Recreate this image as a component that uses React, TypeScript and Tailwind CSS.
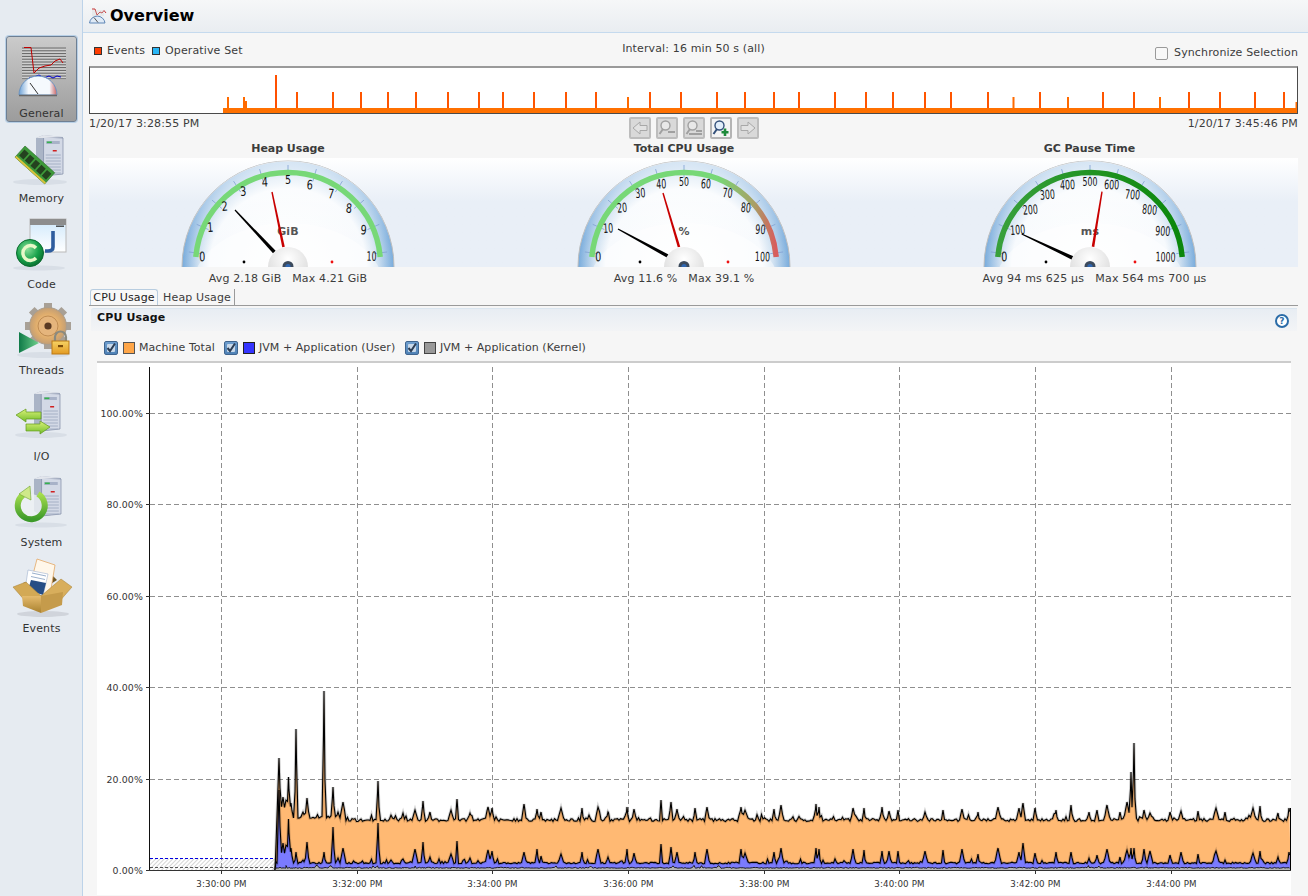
import React from "react";

function seeded(seed: number) {
  let s = seed;
  return () => {
    s = (s * 1664525 + 1013904223) % 4294967296;
    return s / 4294967296;
  };
}

// x, machine top y, user top y, half width
const SPIKES: [number, number, number, number][] = [
  [279, 758, 790, 2], [283, 797, 843, 3], [286, 800, 845, 2], [288.5, 777, 819, 1.6], [291, 803, 848, 2], [296, 729, 852, 1.4],
  [303, 812, 860, 2], [307, 798, 842, 2], [324, 691, 852, 1.4], [333, 787, 827, 1.6], [338, 812, 858, 2], [343, 802, 848, 3],
  [378, 781, 823, 1.5], [391, 815, 860, 2], [403, 813, 859, 2], [415, 810, 849, 3], [423, 801, 842, 1.6], [430, 812, 857, 2],
  [451, 810, 854, 3], [457, 799, 841, 1.4], [470, 813, 858, 2], [488, 807, 850, 3], [492, 808, 851, 2], [524, 804, 852, 2.4],
  [537, 809, 849, 1.6], [541, 812, 856, 1.6], [561, 808, 854, 3], [582, 808, 852, 1.4], [598, 807, 849, 3], [608, 812, 857, 2],
  [627, 807, 849, 1.4], [634, 809, 853, 2.2], [661, 800, 844, 1.4], [671, 802, 847, 1.8], [677, 809, 852, 2.2], [695, 808, 852, 1.6],
  [707, 807, 849, 2.4], [741, 807, 849, 2], [745, 810, 853, 3.4], [774, 809, 852, 1.6], [781, 805, 848, 2.4], [816, 804, 848, 1.4],
  [819, 807, 849, 1.4], [853, 808, 849, 2.2], [864, 808, 850, 1.4], [882, 807, 851, 1.6], [889, 811, 851, 2.2], [898, 810, 851, 1.4],
  [925, 812, 851, 2.6], [943, 810, 850, 1.6], [962, 809, 849, 2.6], [978, 812, 854, 1.4], [998, 807, 848, 3], [1019, 808, 852, 2],
  [1023, 803, 843, 2.4], [1035, 808, 853, 2], [1056, 810, 852, 1.6], [1071, 805, 852, 1.8], [1089, 812, 858, 1.6], [1097, 810, 855, 1.6],
  [1107, 805, 849, 3], [1120, 812, 857, 1.5], [1127, 802, 850, 3.5], [1131, 772, 848, 1.4], [1134, 743, 848, 1.4],
  [1144, 810, 849, 2], [1150, 813, 851, 3], [1170, 812, 855, 2], [1181, 811, 852, 2.4], [1198, 811, 854, 1.5], [1216, 808, 851, 3.4],
  [1225, 812, 860, 1.5], [1253, 808, 853, 3], [1260, 806, 851, 1.5], [1278, 813, 857, 1.6], [1289, 808, 852, 1.6],
];

function buildChart() {
  const r = seeded(77);
  const top: [number, number][] = [[275, 870], [275.5, 858]];
  const user: [number, number][] = [[275, 870], [276, 862]];
  const kern: [number, number][] = [[275, 870], [276, 868]];
  const xs: number[] = [];
  for (let x = 277; x <= 1290; x += 1.5) xs.push(x);
  SPIKES.forEach((s) => xs.push(s[0]));
  xs.sort((a, b) => a - b);
  for (const x of xs) {
    const bump = r() > 0.88 ? r() * 5 : 0;
    const base = (x < 345 ? 817 : 820) + (r() - 0.5) * 3 - bump;
    const ub = 863 + (r() - 0.5) * 1.6 - (r() > 0.93 ? r() * 4 : 0);
    let t = base;
    let u = ub;
    for (const [sx, st, su, w] of SPIKES) {
      const k = 1 - Math.abs(x - sx) / w;
      if (k > 0) {
        t = Math.min(t, base - (base - st) * k);
        u = Math.min(u, ub - (ub - su) * k);
      }
    }
    top.push([x, t]);
    user.push([x, u]);
    kern.push([x, 867.8 + (r() - 0.5) * 1 - (r() > 0.97 ? 2 : 0)]);
  }
  const line = (p: [number, number][]) => p.map(([a, b], i) => `${i ? "L" : "M"}${a} ${b.toFixed(1)}`).join(" ");
  const area = (p: [number, number][]) => `${line(p)} L1290.5 870 L275 870 Z`;
  return { t: area(top), u: area(user), k: area(kern), tl: line(top), ul: line(user), kl: line(kern) };
}
const CHART = buildChart();

const XT: [number, string][] = [
  [221.5, "3:30:00 PM"], [357.5, "3:32:00 PM"], [492.5, "3:34:00 PM"], [628.5, "3:36:00 PM"],
  [764.5, "3:38:00 PM"], [899.5, "3:40:00 PM"], [1035.5, "3:42:00 PM"], [1171.5, "3:44:00 PM"],
];
const YT: [number, string][] = [
  [413.5, "100.00%"], [504.5, "80.00%"], [596.5, "60.00%"], [687.5, "40.00%"], [779.5, "20.00%"], [870.5, "0.00%"],
];

function CpuChart() {
  return (
    <svg width="1194" height="532" viewBox="97 363 1194 532" className="block">
      <defs>
        <pattern id="hatch" width="3" height="3" patternUnits="userSpaceOnUse" patternTransform="rotate(45)">
          <line x1="0" y1="0" x2="0" y2="3" stroke="#a9a9a9" strokeWidth="1" />
        </pattern>
      </defs>
      {YT.slice(0, 5).map(([y]) => (
        <line key={y} x1="150" x2="1291" y1={y} y2={y} stroke="#8f8f8f" strokeDasharray="5 3" />
      ))}
      {XT.map(([x]) => (
        <line key={x} x1={x} x2={x} y1="367" y2="870" stroke="#8f8f8f" strokeDasharray="5 3" />
      ))}
      <rect x="150" y="858.5" width="125" height="11.5" fill="url(#hatch)" />
      <line x1="150" x2="275" y1="858.5" y2="858.5" stroke="#0000e0" strokeDasharray="3 2" />
      <line x1="150" x2="275" y1="867.5" y2="867.5" stroke="#555" strokeDasharray="3 2" />
      <path d={CHART.t} fill="#ffb973" />
      <path d={CHART.tl} fill="none" stroke="#000" strokeWidth="3" strokeOpacity="0.18" />
      <path d={CHART.tl} fill="none" stroke="#000" strokeWidth="1.1" />
      <path d={CHART.u} fill="#7b7bff" />
      <path d={CHART.ul} fill="none" stroke="#000" strokeWidth="3" strokeOpacity="0.15" />
      <path d={CHART.ul} fill="none" stroke="#000" strokeWidth="1.1" />
      <path d={CHART.k} fill="#b3b3b3" />
      <path d={CHART.kl} fill="none" stroke="#000" strokeWidth="0.8" />
      <line x1="1290.5" x2="1290.5" y1="808" y2="870" stroke="#000" />
      <line x1="150" x2="1291" y1="870.5" y2="870.5" stroke="#333" />
      <line x1="149.5" x2="149.5" y1="367" y2="871" stroke="#111" />
      {YT.map(([y, t]) => (
        <g key={t}>
          <line x1="146" x2="150" y1={y} y2={y} stroke="#333" />
          <text x="143" y={y + 3.5} textAnchor="end" fontSize="9.4" fill="#333" fontFamily="'DejaVu Sans', sans-serif">{t}</text>
        </g>
      ))}
      {XT.map(([x, t]) => (
        <g key={t}>
          <line x1={x} x2={x} y1="870" y2="874" stroke="#333" />
          <text x={x} y="887" textAnchor="middle" fontSize="8.7" fill="#333" fontFamily="'DejaVu Sans', sans-serif">{t}</text>
        </g>
      ))}
    </svg>
  );
}

const TALL = [297, 333, 361, 388, 416, 448, 479, 503, 534, 566, 596, 650, 681, 717, 745, 774, 799, 835, 866, 893, 925, 951, 988, 1040, 1103, 1134, 1189, 1220, 1255, 1284];
const SHORT = [228, 244, 628, 1013.5, 1068, 1160];

function Timeline() {
  return (
    <div className="h-[48px] border border-[#4a4a4a] border-t-[#9a9a9a] border-t-2 bg-white">
      <svg width="1207" height="45" viewBox="90 68 1207 45" className="block">
        {TALL.map((x) => (
          <rect key={x} x={x - 1} y="92" width="2" height="18" fill="#ff5500" />
        ))}
        <rect x="275" y="75" width="2" height="34" fill="#ff5000" />
        {SHORT.map((x) => (
          <rect key={x} x={x - 1} y="97" width="2" height="12" fill="#ff6a00" />
        ))}
        <rect x="245" y="101" width="2" height="8" fill="#ff6a00" />
        <rect x="1295.5" y="102" width="1.5" height="8" fill="#ff6a00" />
        <rect x="223" y="108" width="1074" height="5" fill="#ff7000" />
      </svg>
    </div>
  );
}

type GaugeProps = {
  id: string;
  title: string;
  labels: string[];
  unit: string;
  stats: string;
  statsClass: string;
  black: [number, number, number, number];
  red: [number, number, number, number];
  dots: [number, number];
  cx: number;
  arc: "green" | "cpu" | "dark";
};

function taper(x1: number, y1: number, x2: number, y2: number, w1: number, w2: number) {
  const dx = x2 - x1;
  const dy = y2 - y1;
  const l = Math.hypot(dx, dy);
  const nx = -dy / l;
  const ny = dx / l;
  return `${x1 + nx * w1},${y1 + ny * w1} ${x2 + nx * w2},${y2 + ny * w2} ${x2 - nx * w2},${y2 - ny * w2} ${x1 - nx * w1},${y1 - ny * w1}`;
}

const LABEL_ANGLES = [5.6, 26, 43, 59, 74.5, 90, 105, 121, 137, 155, 174];

function labelRadius(t: string, a: number) {
  if (t.length === 4) return 76;
  if (t.length === 3) return 84 - 4 * (Math.abs(a - 90) / 65);
  if (t.length === 2) return 84;
  return a > 90 ? 83 : 86;
}

function Gauge({ id, title, labels, unit, stats, statsClass, black, red, dots, cx, arc }: GaugeProps) {
  const ox = cx - 110;
  const oy = 158;
  const cy = 107;
  const n = labels.length - 1;
  const ang = (i: number) => 7.5 + (165 * i) / n;
  const pt = (a: number, r: number) => {
    const t = (a * Math.PI) / 180;
    return [110 - r * Math.cos(t), cy - r * Math.sin(t)];
  };
  const [ax, ay] = pt(5, 92.5);
  const [bx, by] = pt(175, 92.5);
  const arcStroke = arc === "green" ? "#77d877" : `url(#${id}arc)`;
  return (
    <div className="flex flex-col items-center">
      <div className="h-[18px] w-full text-center font-bold leading-[18px] tracking-[-0.05px] text-[#3c3c3c]">{title}</div>
      <div className="flex h-[109px] w-full justify-center overflow-hidden bg-gradient-to-b from-white to-[#e9eff7] to-40%">
        <svg width="220" height="109" viewBox="0 0 220 109" className="block shrink-0">
          <defs>
            <radialGradient id={`${id}rim`} gradientUnits="userSpaceOnUse" cx="110" cy="109" r="106">
              <stop offset="0" stopColor="#ffffff" />
              <stop offset="0.74" stopColor="#f7fafd" />
              <stop offset="0.84" stopColor="#d3e3f2" />
              <stop offset="1" stopColor="#76aadb" />
            </radialGradient>
            <linearGradient id={`${id}top`} x1="0" x2="0" y1="0" y2="1">
              <stop offset="0" stopColor="#ffffff" stopOpacity="0.7" />
              <stop offset="0.75" stopColor="#ffffff" stopOpacity="0.05" />
              <stop offset="1" stopColor="#ffffff" stopOpacity="0" />
            </linearGradient>
            <linearGradient id={`${id}arc`} gradientUnits="userSpaceOnUse" x1="18" x2="202" y1="50" y2="50">
              {arc === "dark" ? (
                <>
                  <stop offset="0" stopColor="#38a03c" />
                  <stop offset="1" stopColor="#0b870b" />
                </>
              ) : (
                <>
                  <stop offset="0" stopColor="#77d877" />
                  <stop offset="0.68" stopColor="#77d877" />
                  <stop offset="0.88" stopColor="#a8a066" />
                  <stop offset="1" stopColor="#d85c5c" />
                </>
              )}
            </linearGradient>
            <radialGradient id={`${id}hub`} cx="0.5" cy="0.3" r="0.8">
              <stop offset="0" stopColor="#ffffff" />
              <stop offset="1" stopColor="#d2d2d2" />
            </radialGradient>
          </defs>
          <circle cx="110" cy="109" r="106" fill={`url(#${id}rim)`} stroke="#bdbdbd" strokeWidth="1" />
          <path d="M4 109 A106 106 0 0 1 216 109 Z" fill={`url(#${id}top)`} />
          <ellipse cx="110" cy="131" rx="96" ry="66" fill="#ffffff" opacity="0.45" />
          {labels.map((_, i) => {
            const a = ang(i);
            const [x1, y1] = pt(a, 87);
            const [x2, y2] = pt(a, 100);
            return <line key={i} x1={x1} y1={y1} x2={x2} y2={y2} stroke="#7f9fd2" strokeWidth="0.8" />;
          })}
          <path d={`M${ax} ${ay} A92.5 92.5 0 0 1 ${bx} ${by}`} fill="none" stroke={arcStroke} strokeWidth="5.5" />
          {labels.map((t, i) => {
            const a = LABEL_ANGLES[i];
            const [x, y] = pt(a, labelRadius(t, a));
            const rot = 5 * Math.sin((2 * (a - 90) * Math.PI) / 180);
            return (
              <text
                key={t}
                transform={`translate(${x} ${y + 4.5}) rotate(${rot}) scale(${t.length === 1 ? 0.74 : 0.6} 1)`}
                textAnchor="middle"
                fontSize="13"
                fill="#111"
                fontFamily="'DejaVu Sans', sans-serif"
              >
                {t}
              </text>
            );
          })}
          <text x="110" y="77" textAnchor="middle" fontSize="11" fontWeight="700" fill="#555" fontFamily="'DejaVu Sans', sans-serif">
            {unit}
          </text>
          <polygon points={taper(red[0] - ox, red[1] - oy, red[2] - ox, red[3] - oy, 1.3, 0.7)} fill="#c80000" />
          <polygon points={taper(black[0] - ox, black[1] - oy, black[2] - ox, black[3] - oy, 1.8, 0.6)} fill="#000" />
          <circle cx="110" cy="109" r="20" fill={`url(#${id}hub)`} />
          <circle cx="110" cy="108.5" r="5.5" fill="#3c4a5c" />
          <circle cx="110" cy="108.5" r="2.6" fill="#2f66b0" />
          <circle cx={dots[0] - ox} cy="104" r="1.4" fill="#000" />
          <circle cx={dots[1] - ox} cy="104" r="1.4" fill="#ee1111" />
        </svg>
      </div>
      <div className={statsClass}>{stats}</div>
    </div>
  );
}

function Server({ x, y, w, h }: { x: number; y: number; w: number; h: number }) {
  return (
    <g>
      <polygon points={`${x},${y + 3} ${x + w * 0.28},${y} ${x + w},${y + 2} ${x + w},${y + h} ${x + w * 0.28},${y + h + 2} ${x},${y + h - 3}`} fill="#aab4c6" />
      <polygon points={`${x + w * 0.28},${y + 2} ${x + w},${y + 3} ${x + w},${y + h} ${x + w * 0.28},${y + h + 2}`} fill="#d3d9e6" stroke="#7f8ba5" strokeWidth="0.7" />
      <polygon points={`${x},${y + 3} ${x + w * 0.28},${y} ${x + w},${y + 2} ${x + w * 0.28},${y + 3}`} fill="#e2e5ec" />
      <rect x={x + w * 0.38} y={y + 6} width={w * 0.5} height="3" fill="#a8b2c8" />
      <rect x={x + w * 0.4} y={y + 6.5} width="5" height="1.6" fill="#34b24c" />
      <rect x={x + w * 0.62} y={y + 15} width="4" height="1.5" fill="#d02020" />
      {[0, 1, 2, 3, 4, 5, 6].map((i) => (
        <line key={i} x1={x + w * 0.36} x2={x + w * 0.92} y1={y + 20 + i * 3} y2={y + 20 + i * 3} stroke="#9fabc2" strokeWidth="0.9" />
      ))}
    </g>
  );
}

function Shadow({ cx, cy, rx, ry }: { cx: number; cy: number; rx: number; ry: number }) {
  return <ellipse cx={cx} cy={cy} rx={rx} ry={ry} fill="#b4bdca" opacity="0.28" />;
}

function IconGeneral() {
  const rows = Array.from({ length: 12 }, (_, i) => 48 + i * 2.8);
  return (
    <svg width="70" height="68" viewBox="6 36 70 68" className="block">
      <defs>
        <linearGradient id="gd" x1="0" x2="1" y1="0" y2="0">
          <stop offset="0" stopColor="#6ea2d6" />
          <stop offset="0.25" stopColor="#f5f9fd" />
          <stop offset="0.8" stopColor="#f5f9fd" />
          <stop offset="1" stopColor="#c96060" />
        </linearGradient>
      </defs>
      <rect x="21" y="47" width="44" height="33" fill="#cfcfcf" />
      {rows.map((y) => (
        <line key={y} x1="21" x2="65" y1={y} y2={y} stroke="#555" strokeWidth="0.9" />
      ))}
      <polyline points="23,47.5 30,47.5 33,73 38,68 44,66 50,65 54,61 59,59 62,63" fill="none" stroke="#c00000" strokeWidth="1" />
      <polyline points="28,78 33,77 38,75 43,78 48,76 52,78 56,76 60,77" fill="none" stroke="#0000d0" strokeWidth="1" />
      <path d="M18 95 A19 19 0 0 1 56 95 Z" fill="url(#gd)" stroke="#6b94c2" strokeWidth="1" />
      <line x1="29" y1="83" x2="37" y2="94" stroke="#333" strokeWidth="1" />
      <path d="M18 95.5 H56" stroke="#666" strokeWidth="1.4" />
    </svg>
  );
}

function IconMemory() {
  const chips = [0, 1, 2, 3, 4];
  return (
    <svg width="70" height="68" viewBox="6 121 70 68" className="block">
      <Shadow cx={39} cy={182} rx={27} ry={3} />
      <Server x={35} y={135} w={27} h={39} />
      <g transform="translate(24 146) rotate(42)">
        <rect x="0" y="0" width="40" height="15" fill="#3e9a3a" stroke="#2d6f2a" strokeWidth="0.6" />
        {chips.map((i) => (
          <rect key={i} x={2 + i * 7.6} y="3" width="5.8" height="8" fill="#24421f" />
        ))}
        <rect x="0" y="13" width="40" height="2" fill="#d9c23a" />
      </g>
    </svg>
  );
}

function IconCode() {
  return (
    <svg width="70" height="68" viewBox="6 207 70 68" className="block">
      <defs>
        <linearGradient id="cw" x1="0" x2="0" y1="0" y2="1">
          <stop offset="0" stopColor="#cfe8fb" />
          <stop offset="1" stopColor="#ffffff" />
        </linearGradient>
        <radialGradient id="cg" cx="0.4" cy="0.35" r="0.7">
          <stop offset="0" stopColor="#8ce09a" />
          <stop offset="0.6" stopColor="#17a14a" />
          <stop offset="1" stopColor="#0a6b2d" />
        </radialGradient>
      </defs>
      <Shadow cx={38} cy={268} rx={26} ry={2.5} />
      <rect x="29" y="219" width="36" height="33" fill="url(#cw)" stroke="#b9b9b9" />
      <rect x="29" y="219" width="36" height="6" fill="#8d8d8d" />
      <rect x="55" y="225.5" width="8" height="1.4" fill="#444" />
      <path d="M52 231 V247 Q52 251 47 251 H44" fill="none" stroke="#2e5d9e" strokeWidth="3.6" />
      <circle cx="29" cy="253" r="13.5" fill="url(#cg)" stroke="#0b6b30" />
      <path d="M35 248 A7.5 7.5 0 1 0 35 258" fill="none" stroke="#e8f8c8" strokeWidth="3.4" />
    </svg>
  );
}

function IconThreads() {
  const teeth = [0, 45, 90, 135, 180, 225, 270, 315];
  return (
    <svg width="70" height="68" viewBox="6 293 70 68" className="block">
      <defs>
        <radialGradient id="tg" cx="0.5" cy="0.5" r="0.55">
          <stop offset="0" stopColor="#f7d7a3" />
          <stop offset="0.6" stopColor="#e0ad6c" />
          <stop offset="1" stopColor="#b99a78" />
        </radialGradient>
        <linearGradient id="tp" x1="0" x2="1" y1="0" y2="0">
          <stop offset="0" stopColor="#0f7a48" />
          <stop offset="1" stopColor="#6fd08c" />
        </linearGradient>
        <linearGradient id="tl" x1="0" x2="0" y1="0" y2="1">
          <stop offset="0" stopColor="#f6d365" />
          <stop offset="1" stopColor="#e39a22" />
        </linearGradient>
      </defs>
      <Shadow cx={42} cy={355} rx={26} ry={3} />
      {teeth.map((a) => (
        <rect key={a} x="43" y="303" width="8" height="8" fill="#a8a096" transform={`rotate(${a} 47 326)`} />
      ))}
      <circle cx="47" cy="326" r="18.5" fill="url(#tg)" stroke="#a99e90" />
      <circle cx="47" cy="326" r="10" fill="#e5b57c" stroke="#c08c52" />
      <circle cx="47" cy="326" r="3.6" fill="#5a3a22" />
      <polygon points="18,332 38,343 18,353" fill="url(#tp)" />
      <path d="M54 341 V337 A5.5 5.5 0 0 1 65 337 V341" fill="none" stroke="#8a8a80" strokeWidth="2.2" />
      <rect x="51" y="341" width="17" height="13" fill="url(#tl)" stroke="#bb7a16" />
      <rect x="57" y="345" width="5" height="2.2" fill="#7a4b0a" />
    </svg>
  );
}

function Arrow({ d, fill }: { d: string; fill: string }) {
  return <path d={d} fill={fill} stroke="#5e9a1a" strokeWidth="0.7" />;
}

function IconIO() {
  return (
    <svg width="70" height="68" viewBox="6 379 70 68" className="block">
      <defs>
        <linearGradient id="ia" x1="0" x2="0" y1="0" y2="1">
          <stop offset="0" stopColor="#dcf27a" />
          <stop offset="1" stopColor="#71bd2a" />
        </linearGradient>
      </defs>
      <Shadow cx={40} cy={435} rx={26} ry={3} />
      <Server x={33} y={391} w={26} h={38} />
      <Arrow d="M15 415 L25 409 V412 H40 V419 H25 V422 Z" fill="url(#ia)" />
      <Arrow d="M49 427 L39 421 V424 H25 V431 H39 V434 Z" fill="url(#ia)" />
    </svg>
  );
}

function IconSystem() {
  return (
    <svg width="70" height="68" viewBox="6 465 70 68" className="block">
      <defs>
        <linearGradient id="sa" x1="0" x2="0" y1="0" y2="1">
          <stop offset="0" stopColor="#a6de4e" />
          <stop offset="1" stopColor="#3d9a2a" />
        </linearGradient>
      </defs>
      <Shadow cx={40} cy={525} rx={26} ry={2.5} />
      <Server x={33} y={476} w={27} h={38} />
      <circle cx="30" cy="506" r="12" fill="#eef1f4" opacity="0.8" />
      <path d="M37 494 A13.5 13.5 0 1 1 22 495" fill="none" stroke="url(#sa)" strokeWidth="6" />
      <polygon points="18,494 29,486 30,500" fill="#cfe98a" stroke="#6aa22a" strokeWidth="0.6" />
    </svg>
  );
}

function IconEvents() {
  return (
    <svg width="70" height="68" viewBox="6 551 70 68" className="block">
      <defs>
        <linearGradient id="eb" x1="0" x2="0" y1="0" y2="1">
          <stop offset="0" stopColor="#e5bb6d" />
          <stop offset="1" stopColor="#a9812f" />
        </linearGradient>
      </defs>
      <ellipse cx="42" cy="614" rx="26" ry="3" fill="#a5aab3" opacity="0.35" />
      <polygon points="22,583 50,574 56,580 28,598" fill="#6d5524" />
      <polygon points="36,559 54,565 49,595 28,590" fill="#fff7ea" stroke="#e3a866" strokeWidth="0.8" />
      <polygon points="27,570 47,574 42,596 24,590" fill="#ffffff" stroke="#9fb2cf" strokeWidth="0.6" />
      <polygon points="30,580 45,583 42,595 27,590" fill="#274e85" />
      <line x1="31" y1="573" x2="45" y2="576" stroke="#9ab0cc" />
      <line x1="30" y1="576.5" x2="44" y2="579.5" stroke="#9ab0cc" />
      <polygon points="12,587 25,582 40,596 26,603" fill="#d3a955" stroke="#a47f33" strokeWidth="0.5" />
      <polygon points="60,579 71,587 57,603 40,596" fill="#d8ae5c" stroke="#a47f33" strokeWidth="0.5" />
      <polygon points="21,596 40,596 40,613 22,606" fill="url(#eb)" />
      <polygon points="40,596 62,592 61,605 40,613" fill="#c59b4b" />
    </svg>
  );
}

function NavItem({ icon, label, active, first }: { icon: React.ReactNode; label: string; active?: boolean; first?: boolean }) {
  return (
    <div
      className={
        active
          ? "flex h-[86px] w-[71px] flex-col items-center rounded-[3px] border border-[#6e7f93] bg-gradient-to-b from-[#cbcbcb] to-[#9c9c9c] shadow-[0_0_0_1px_#b7cfe6]"
          : "flex h-[86px] w-[71px] flex-col items-center"
      }
    >
      <div className={first ? "-mt-px h-[68px]" : "h-[68px]"}>{icon}</div>
      <div className="mt-[3px] leading-[13px] tracking-[0.13px] text-[#333]">{label}</div>
    </div>
  );
}

function CheckBox() {
  return (
    <span className="flex h-[14px] w-[14px] shrink-0 items-center justify-center rounded-[2px] border border-[#3f658f] bg-gradient-to-b from-[#6f9fcf] to-[#4f82b6]">
      <svg width="12" height="12" viewBox="0 0 12 12">
        <rect x="2" y="2" width="8" height="8" rx="1" fill="#c9d9ea" />
        <path d="M2.5 6 L5 9 L10 1.5" fill="none" stroke="#2c3e55" strokeWidth="2" />
      </svg>
    </span>
  );
}

function Series({ color, border, label, w }: { color: string; border: string; label: string; w: string }) {
  return (
    <div className={`flex items-center ${w}`}>
      <CheckBox />
      <span className="ml-[5px] h-[12px] w-[12px] shrink-0 border" style={{ background: color, borderColor: border }} />
      <span className="ml-[4px] whitespace-nowrap tracking-[0.05px] text-[#3c3c3c]">{label}</span>
    </div>
  );
}

function ToolButton({ active, children }: { active?: boolean; children: React.ReactNode }) {
  return (
    <div className={active ? "flex h-[22px] w-[22px] items-center justify-center rounded-[2px] border-2 border-[#b4b4b4] bg-[#f4f4f4]" : "flex h-[22px] w-[22px] items-center justify-center rounded-[2px] border-2 border-[#bdbdbd] bg-[#d9d9d9]"}>
      {children}
    </div>
  );
}

function Toolbar() {
  const mag = (
    <>
      <circle cx="7.5" cy="6.5" r="4.5" fill="#e8e8e8" stroke="#a0a0a0" strokeWidth="1.4" />
      <line x1="5" y1="10" x2="1.5" y2="15" stroke="#a0a0a0" strokeWidth="2" />
    </>
  );
  return (
    <div className="flex gap-[5px]">
      <ToolButton>
        <svg width="18" height="18" viewBox="0 0 18 18"><path d="M2 9 L9 3 V6.5 H16 V11.5 H9 V15 Z" fill="#e2e2e2" stroke="#a8a8a8" /></svg>
      </ToolButton>
      <ToolButton>
        <svg width="18" height="18" viewBox="0 0 18 18">{mag}<rect x="10" y="12" width="7" height="2" fill="#a0a0a0" /></svg>
      </ToolButton>
      <ToolButton>
        <svg width="18" height="18" viewBox="0 0 18 18">{mag}<rect x="4" y="14" width="13" height="2" fill="#a0a0a0" /><rect x="11" y="11" width="6" height="2" fill="#a0a0a0" /></svg>
      </ToolButton>
      <ToolButton active>
        <svg width="18" height="18" viewBox="0 0 18 18">
          <circle cx="7.5" cy="6.5" r="4.5" fill="#e2eefa" stroke="#33507a" strokeWidth="1.4" />
          <line x1="5" y1="10" x2="1.5" y2="15" stroke="#33507a" strokeWidth="2" />
          <path d="M13 9.5 V17 M9.5 13.2 H16.5" stroke="#1d8a3a" strokeWidth="2.6" />
        </svg>
      </ToolButton>
      <ToolButton>
        <svg width="18" height="18" viewBox="0 0 18 18"><path d="M16 9 L9 3 V6.5 H2 V11.5 H9 V15 Z" fill="#e2e2e2" stroke="#a8a8a8" /></svg>
      </ToolButton>
    </div>
  );
}

function HeaderIcon() {
  return (
    <svg width="18" height="16" viewBox="0 0 18 16" className="block">
      <path d="M3 1 H6 L8 7 L11 4 L13 5 L15 2.5 L17 5" fill="none" stroke="#c02020" strokeWidth="0.9" />
      <path d="M3 3 H15 M3 5 H15 M3 7 H15" stroke="#c8c8c8" strokeWidth="0.5" />
      <path d="M0.5 15 A7.8 7.8 0 0 1 16 15 Z" fill="#dfeaf6" stroke="#5f86b6" strokeWidth="1" />
      <line x1="5" y1="9.5" x2="9" y2="14.5" stroke="#444" strokeWidth="0.9" />
    </svg>
  );
}

export default function App() {
  return (
    <div className="flex h-[896px] w-[1308px] overflow-hidden bg-[#f6f6f6] font-['DejaVu_Sans',sans-serif] text-[11px] text-[#333]">
      <aside className="flex h-full w-[83px] shrink-0 flex-col items-start border-r border-[#bdd3e9] bg-[#e6ebf1] pl-[6px] pt-[35px]">
        <div className="h-[86px] pt-px">
          <NavItem active first icon={<IconGeneral />} label="General" />
        </div>
        <NavItem icon={<IconMemory />} label="Memory" />
        <NavItem icon={<IconCode />} label="Code" />
        <NavItem icon={<IconThreads />} label="Threads" />
        <NavItem icon={<IconIO />} label="I/O" />
        <NavItem icon={<IconSystem />} label="System" />
        <NavItem icon={<IconEvents />} label="Events" />
      </aside>
      <main className="flex min-w-0 flex-1 flex-col">
        <header className="flex h-[33px] items-center gap-[3px] border-b border-[#c5daee] bg-gradient-to-b from-[#f6f7f8] to-[#e9edf1] pl-[6px]">
          <HeaderIcon />
          <h1 className="text-[16px] font-bold leading-[20px] text-black">Overview</h1>
        </header>
        <div className="ml-[6px] mr-[10px] flex flex-col tracking-[0.13px]">
          <div className="grid h-[33px] grid-cols-[1fr_auto_1fr]">
            <div className="mt-[11px] flex h-[14px] items-center pl-[5px]">
              <span className="h-[8px] w-[8px] border border-[#333] bg-[#ff3c00]" />
              <span className="ml-[5px] text-[#3c3c3c]">Events</span>
              <span className="ml-[7px] h-[8px] w-[8px] border border-[#333] bg-[#29b6f6]" />
              <span className="ml-[5px] text-[#3c3c3c]">Operative Set</span>
            </div>
            <div className="mt-[9px] h-[14px] leading-[14px] text-[#3c3c3c]">Interval: 16 min 50 s (all)</div>
            <div className="mt-[13px] flex h-[14px] items-center justify-end">
              <span className="h-[13px] w-[13px] rounded-[2px] border border-[#9a9a9a] bg-[#f8f8f8]" />
              <span className="ml-[6px] text-[#3c3c3c]">Synchronize Selection</span>
            </div>
          </div>
          <Timeline />
          <div className="grid h-[26px] grid-cols-[1fr_auto_1fr] items-start">
            <div className="mt-[3px] leading-[14px] text-[#3c3c3c]">1/20/17 3:28:55 PM</div>
            <div className="mt-[3px]"><Toolbar /></div>
            <div className="mt-[3px] text-right leading-[14px] text-[#3c3c3c]">1/20/17 3:45:46 PM</div>
          </div>
          <div className="grid grid-cols-[398px_394px_417px]">
            <Gauge
              id="h"
              title="Heap Usage"
              labels={["0", "1", "2", "3", "4", "5", "6", "7", "8", "9", "10"]}
              unit="GiB"
              stats={"Avg 2.18 GiB   Max 4.21 GiB"}
              statsClass="h-[22px] w-full whitespace-pre pt-px text-center leading-[22px] tracking-[0.13px] text-[#3c3c3c]"
              black={[274.3, 252, 235, 210]}
              red={[283.5, 247, 272, 192]}
              dots={[244, 332]}
              cx={288}
              arc="green"
            />
            <Gauge
              id="c"
              title="Total CPU Usage"
              labels={["0", "10", "20", "30", "40", "50", "60", "70", "80", "90", "100"]}
              unit="%"
              stats={"Avg 11.6 %   Max 39.1 %"}
              statsClass="h-[22px] w-full whitespace-pre pt-px text-center leading-[22px] tracking-[0.13px] text-[#3c3c3c]"
              black={[667.7, 256, 618, 229]}
              red={[679, 247, 663, 193]}
              dots={[640, 728]}
              cx={684}
              arc="cpu"
            />
            <Gauge
              id="g"
              title="GC Pause Time"
              labels={["0", "100", "200", "300", "400", "500", "600", "700", "800", "900", "1000"]}
              unit="ms"
              stats={"Avg 94 ms 625 µs   Max 564 ms 700 µs"}
              statsClass="h-[22px] w-full whitespace-pre pl-[10px] pt-px text-center leading-[22px] tracking-[0.2px] text-[#3c3c3c]"
              black={[1072.7, 258, 1021.7, 234]}
              red={[1093, 246.7, 1102, 191.7]}
              dots={[1046, 1135]}
              cx={1090}
              arc="dark"
            />
          </div>
          <div className="flex h-[17px] items-end border-b border-[#9a9a9a] pl-px">
            <div className="flex h-[16px] w-[68px] items-center justify-center rounded-t-[3px] border border-b-0 border-[#b8cde0] bg-[#f8f8f8] pt-[2px] text-[#222]">CPU Usage</div>
            <div className="flex h-[16px] w-[77px] items-center justify-center border-r border-[#9a9a9a] pl-[2px] pt-[2px] text-[#3c3c3c]">Heap Usage</div>
          </div>
          <div className="ml-[2px] mr-px mt-[2px] flex h-[23px] items-start justify-between rounded-tl-[3px] border-t border-[#dbe6f0] bg-gradient-to-b from-[#e8edf3] to-[#f3f4f6] pl-[6px] pr-[8px] pt-[2px]">
            <span className="font-bold leading-[14px] text-[#111]">CPU Usage</span>
            <span className="mt-[3px] flex h-[14px] w-[14px] items-center justify-center rounded-full border-2 border-[#2b6ca8] bg-white text-[9px] font-bold leading-none text-[#2b6ca8]">?</span>
          </div>
          <div className="ml-[8px] mr-[7px] flex flex-col">
            <div className="flex h-[30px] items-center pl-[7px] pt-[4px]">
              <Series color="#ffa648" border="#555" label="Machine Total" w="w-[120px]" />
              <Series color="#3535ff" border="#222" label="JVM + Application (User)" w="w-[181px]" />
              <Series color="#999999" border="#444" label="JVM + Application (Kernel)" w="w-[200px]" />
            </div>
            <div className="border-t-2 border-[#cccccc] bg-white">
              <CpuChart />
            </div>
          </div>
        </div>
      </main>
    </div>
  );
}
